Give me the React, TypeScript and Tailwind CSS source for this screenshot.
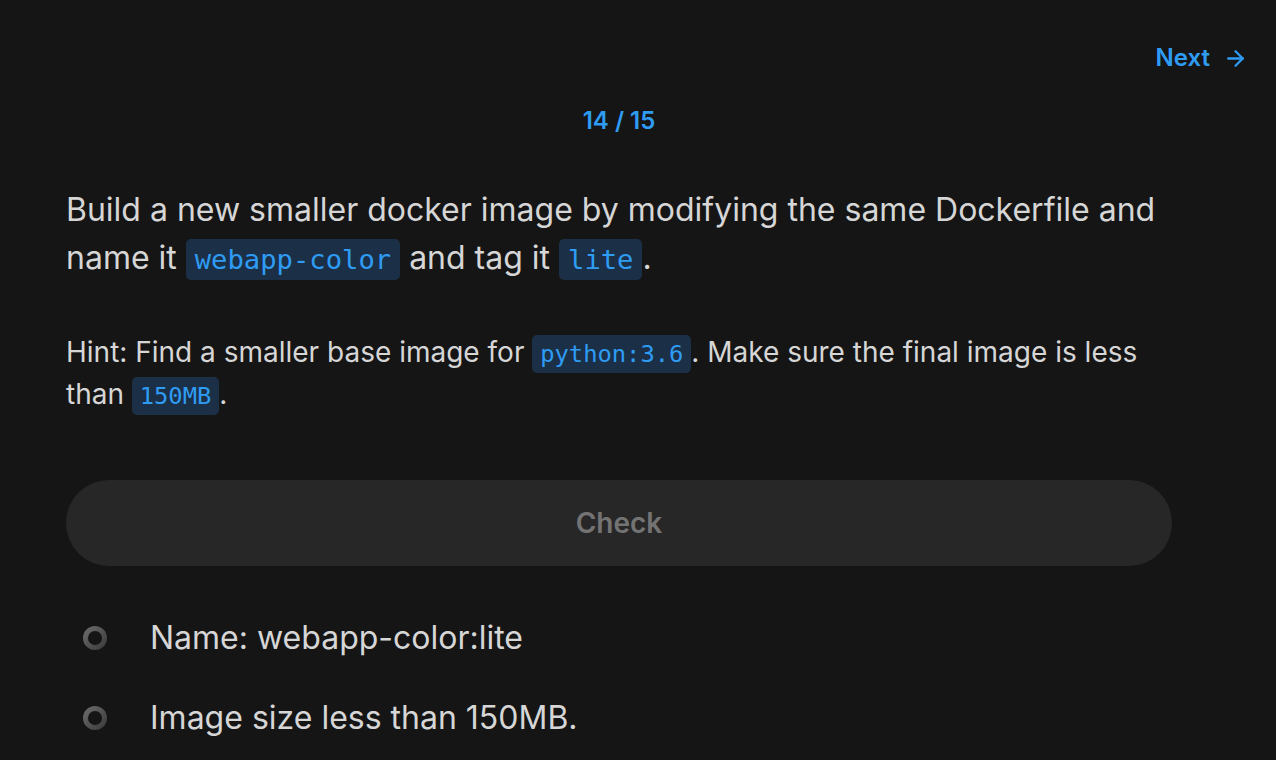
import { ArrowRight } from "lucide-react"

const code =
  "rounded-[5px] bg-[#1b3047] px-[0.33em] py-[0.2em] text-[0.85em] leading-none text-[#2f9cf4] [font-family:'DejaVu_Sans_Mono',monospace]"

function Ring() {
  return (
    <span className="flex h-6 w-6 shrink-0 items-center justify-center rounded-full bg-gradient-to-br from-[#707070] to-[#383838]">
      <span className="h-[14px] w-[14px] rounded-full bg-[#151515]" />
    </span>
  )
}

function CheckItem({ label }: { label: string }) {
  return (
    <li className="flex h-12 items-center">
      <span className="flex w-[84px] pl-[17px]">
        <Ring />
      </span>
      <span className="text-[32px] leading-[48px] text-[#d6d6d6]">{label}</span>
    </li>
  )
}

export default function App() {
  return (
    <div className="min-h-screen w-full bg-[#151515] font-['Inter',sans-serif] text-[#d6d6d6]">
      <header className="flex justify-end pr-[28px] pt-[44px]">
        <button className="flex items-center gap-[13px] text-[24px] font-semibold leading-[28px] text-[#2f9cf4]">
          Next
          <ArrowRight size={25} strokeWidth={2.2} />
        </button>
      </header>

      <main className="ml-[66px] w-[1106px]">
        <p className="mt-[33px] text-center text-[24px] font-semibold leading-[32px] text-[#2f9cf4]">
          14 / 15
        </p>

        <p className="mt-[49px] text-[32px] leading-[48px] text-[#d6d6d6]">
          Build a new smaller docker image by modifying the same Dockerfile and name it{" "}
          <code className={code}>webapp-color</code> and tag it <code className={code}>lite</code>.
        </p>

        <p className="mt-[49px] text-[28px] leading-[42px] text-[#d6d6d6]">
          Hint: Find a smaller base image for <code className={code}>python:3.6</code>. Make sure the
          final image is less than <code className={code}>150MB</code>.
        </p>

        <button className="mt-[65px] flex h-[86px] w-full items-center justify-center rounded-full bg-[#272727] text-[28px] font-semibold text-[#737373]">
          Check
        </button>

        <ul className="mt-[48px] flex flex-col gap-[32px]">
          <CheckItem label="Name: webapp-color:lite" />
          <CheckItem label="Image size less than 150MB." />
        </ul>
      </main>
    </div>
  )
}
